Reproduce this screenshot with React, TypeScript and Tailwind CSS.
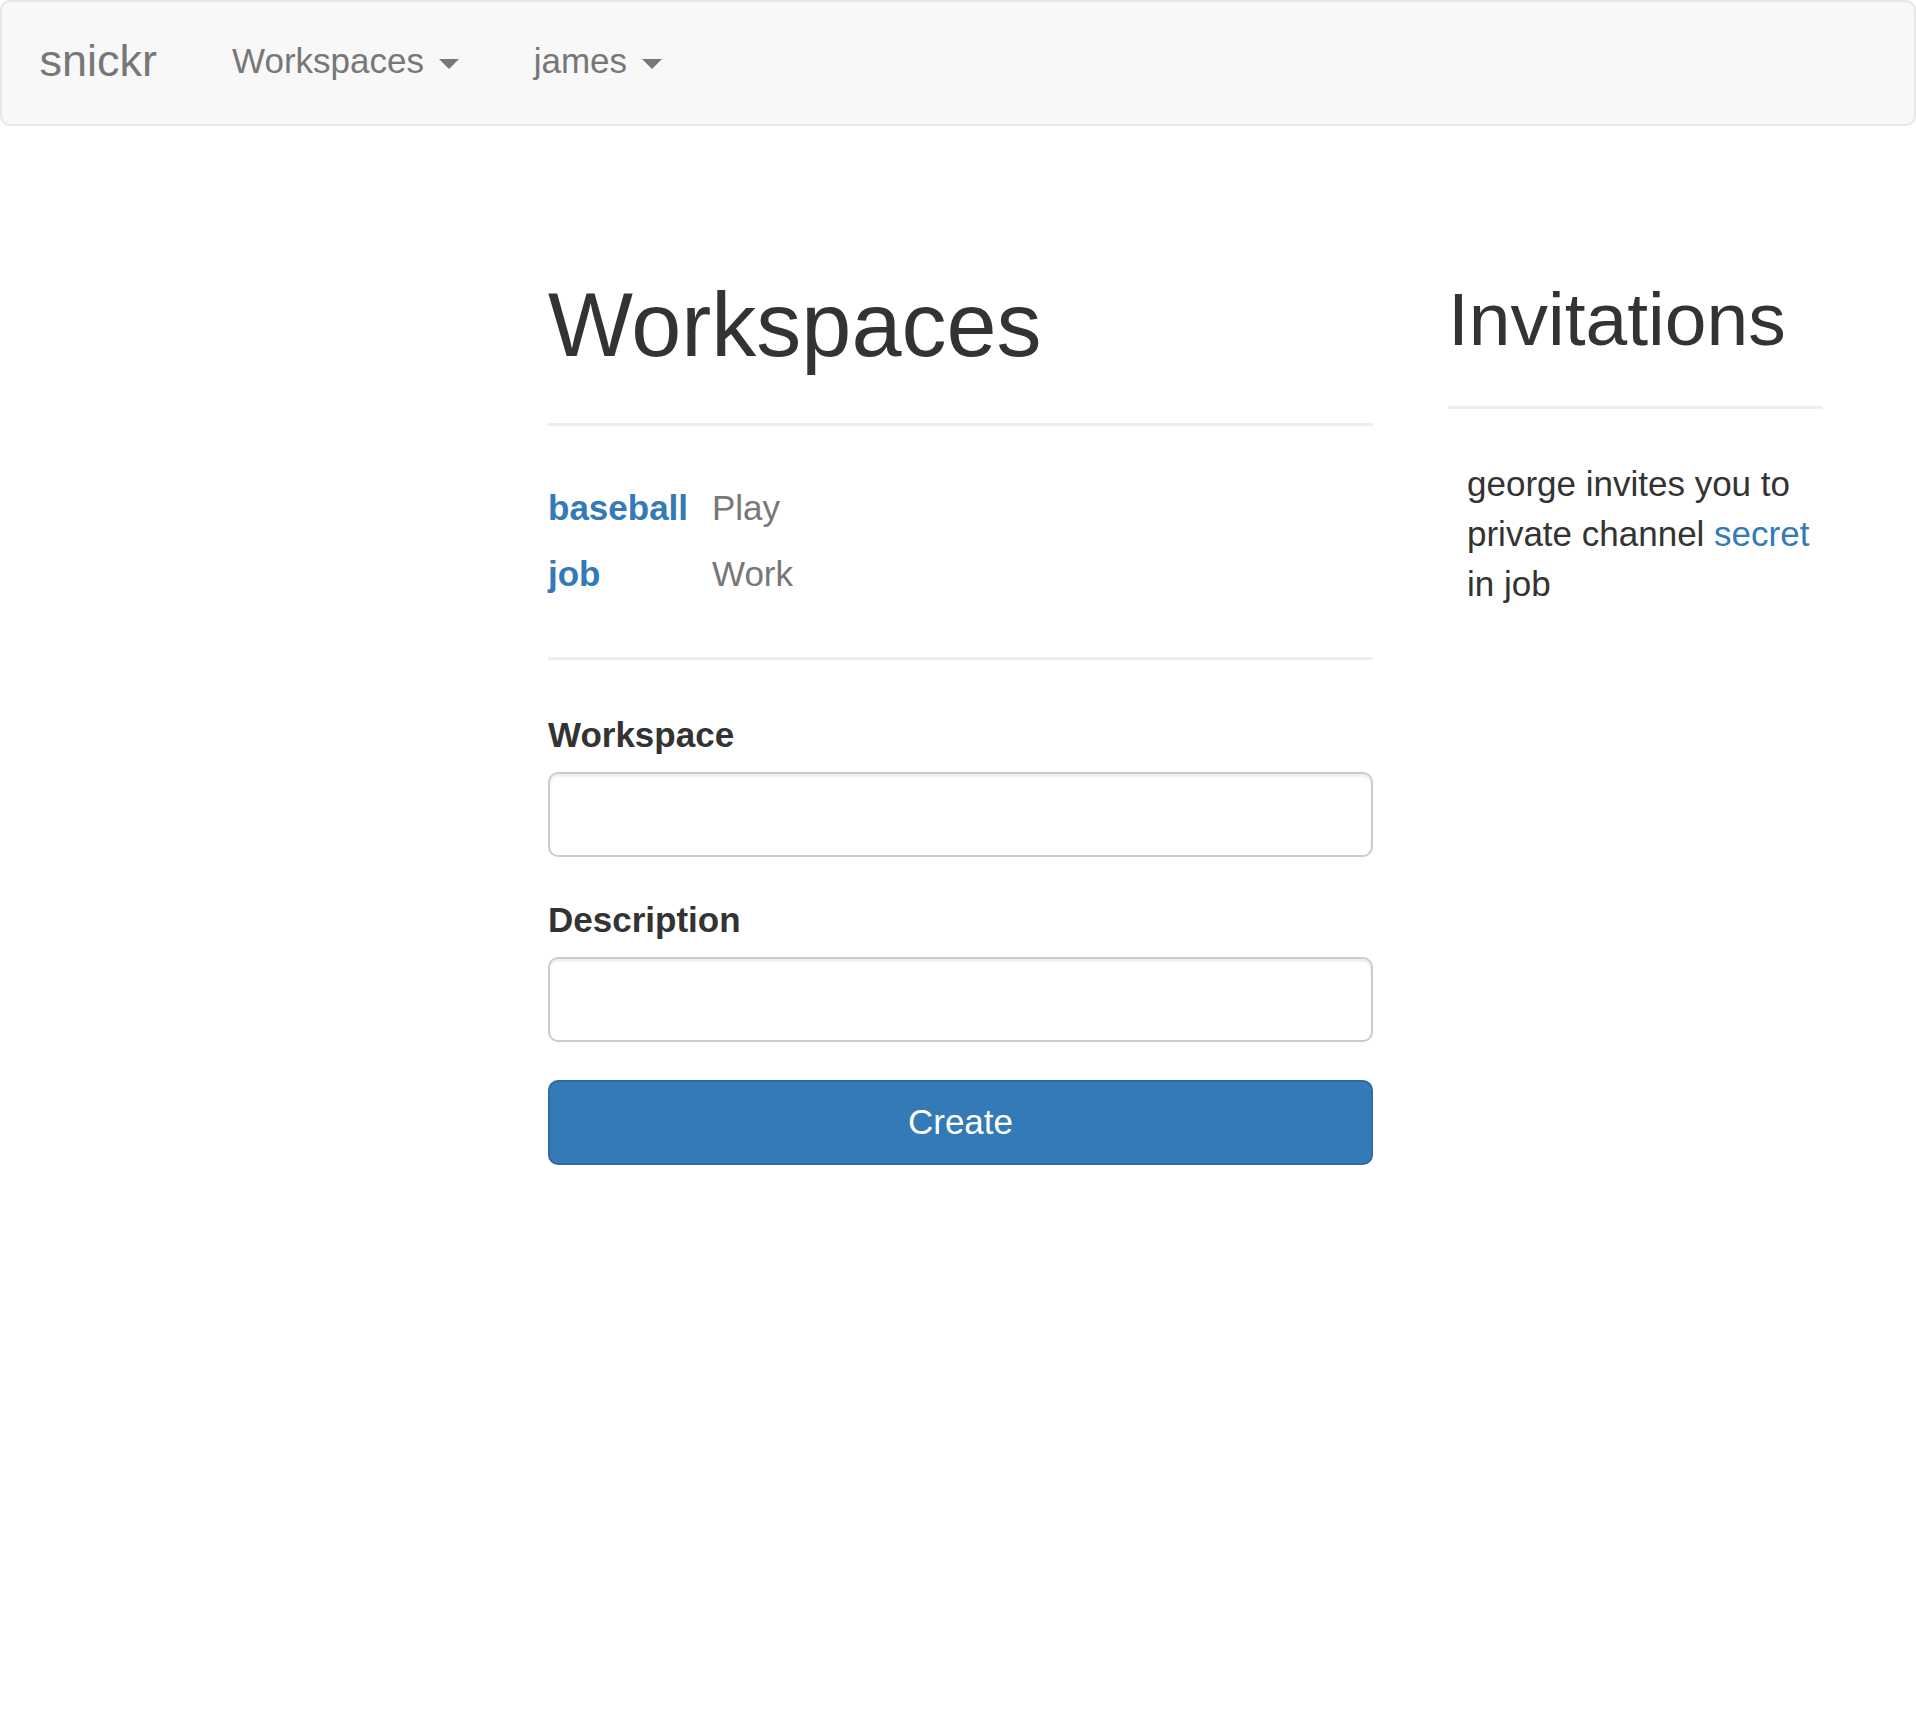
import React from "react";

function Caret() {
  return (
    <span className="inline-block w-0 h-0 ml-[5px] align-middle border-t-[10px] border-t-[#777] border-x-[10px] border-x-transparent" />
  );
}

export default function App() {
  return (
    <div className="min-h-[1714px] bg-white text-[#333] text-[35px] leading-[50px] font-['Liberation_Sans',Arial,sans-serif]">
      <nav className="h-[126px] border-2 border-[#e7e7e7] rounded-[10px] bg-[#f8f8f8] flex items-start text-[#777]">
        <a className="pt-[34px] pl-[37.5px] pr-[37.5px] text-[45px] leading-[50px]">snickr</a>
        <a className="pt-[34px] px-[37.5px] leading-[50px]">
          Workspaces <Caret />
        </a>
        <a className="pt-[34px] px-[37.5px] leading-[50px]">
          james <Caret />
        </a>
      </nav>

      <div className="flex pl-[510.5px] mt-[50px]">
        <div className="w-[900px] px-[37.5px]">
          <div className="mt-[100px] pb-[22.5px] border-b-[3px] border-[#eee]">
            <h1 className="text-[90px] leading-[99px] font-normal mb-[25px]">Workspaces</h1>
          </div>
          <div className="mt-[50px]">
            <div className="flex h-[65.5px] items-center">
              <a className="w-[164px] font-bold text-[#337ab7]">baseball</a>
              <span className="text-[#777]">Play</span>
            </div>
            <div className="flex h-[65.5px] items-center">
              <a className="w-[164px] font-bold text-[#337ab7]">job</a>
              <span className="text-[#777]">Work</span>
            </div>
          </div>
          <hr className="mt-[50px] mb-[50px] border-0 border-t-[3px] border-[#eee]" />
          <form>
            <div className="mb-[37.5px]">
              <label className="block font-bold mb-[12.5px]">Workspace</label>
              <input
                type="text"
                className="block w-full h-[85px] border-2 border-[#ccc] rounded-[10px] bg-white px-[30px] shadow-[inset_0_2.5px_2.5px_rgba(0,0,0,0.075)] outline-none"
              />
            </div>
            <div className="mb-[37.5px]">
              <label className="block font-bold mb-[12.5px]">Description</label>
              <input
                type="text"
                className="block w-full h-[85px] border-2 border-[#ccc] rounded-[10px] bg-white px-[30px] shadow-[inset_0_2.5px_2.5px_rgba(0,0,0,0.075)] outline-none"
              />
            </div>
            <button
              type="button"
              className="block w-full h-[85px] bg-[#337ab7] border-2 border-[#2e6da4] rounded-[10px] text-white text-[35px] leading-[50px]"
            >
              Create
            </button>
          </form>
        </div>

        <div className="w-[450px] px-[37.5px]">
          <div className="mt-[100px] pb-[22.5px] border-b-[3px] border-[#eee]">
            <h2 className="text-[75px] leading-[82.5px] font-normal mb-[23px] pt-[2px]">Invitations</h2>
          </div>
          <p className="mt-[50px] pl-[19px]">
            george invites you to private channel <a className="text-[#337ab7]">secret</a> in job
          </p>
        </div>
      </div>
    </div>
  );
}
